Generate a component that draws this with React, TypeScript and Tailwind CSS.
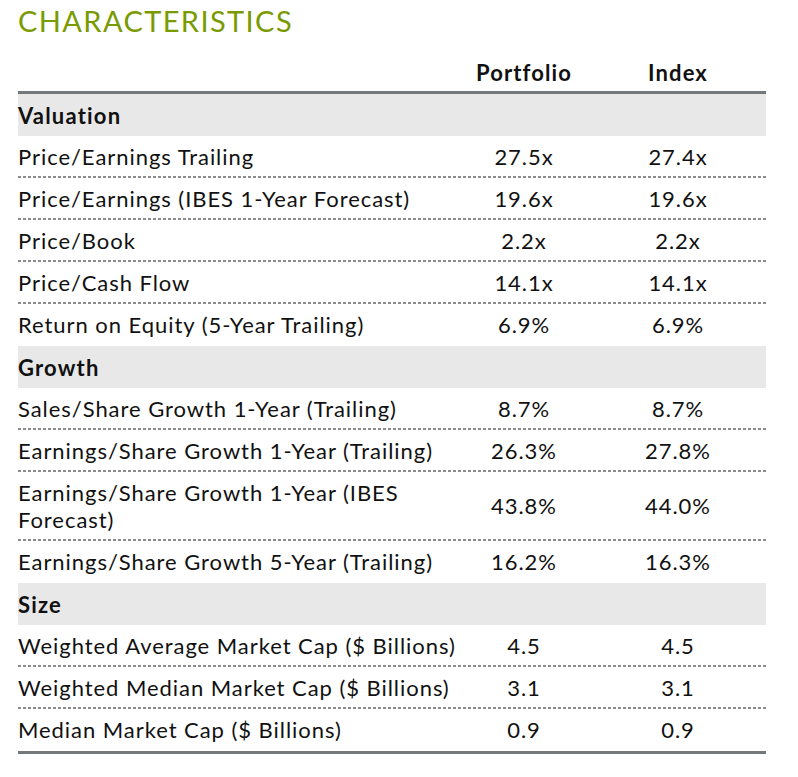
import React from 'react';

type Row = { label: string; portfolio: string; index: string };
type Section = { title: string; rows: Row[] };

const sections: Section[] = [
  {
    title: 'Valuation',
    rows: [
      { label: 'Price/Earnings Trailing', portfolio: '27.5x', index: '27.4x' },
      { label: 'Price/Earnings (IBES 1-Year Forecast)', portfolio: '19.6x', index: '19.6x' },
      { label: 'Price/Book', portfolio: '2.2x', index: '2.2x' },
      { label: 'Price/Cash Flow', portfolio: '14.1x', index: '14.1x' },
      { label: 'Return on Equity (5-Year Trailing)', portfolio: '6.9%', index: '6.9%' },
    ],
  },
  {
    title: 'Growth',
    rows: [
      { label: 'Sales/Share Growth 1-Year (Trailing)', portfolio: '8.7%', index: '8.7%' },
      { label: 'Earnings/Share Growth 1-Year (Trailing)', portfolio: '26.3%', index: '27.8%' },
      { label: 'Earnings/Share Growth 1-Year (IBES Forecast)', portfolio: '43.8%', index: '44.0%' },
      { label: 'Earnings/Share Growth 5-Year (Trailing)', portfolio: '16.2%', index: '16.3%' },
    ],
  },
  {
    title: 'Size',
    rows: [
      { label: 'Weighted Average Market Cap ($ Billions)', portfolio: '4.5', index: '4.5' },
      { label: 'Weighted Median Market Cap ($ Billions)', portfolio: '3.1', index: '3.1' },
      { label: 'Median Market Cap ($ Billions)', portfolio: '0.9', index: '0.9' },
    ],
  },
];

export default function App() {
  return (
    <div className="w-[798px] h-[777px] bg-white pl-[18px] font-['Lato',sans-serif] text-[#111]">
      <h1 className="h-[42px] text-[29px] leading-[42px] text-[#7a9a01] tracking-[1.4px]">CHARACTERISTICS</h1>

      <div className="w-[748px]">
        {/* column headings */}
        <div className="grid grid-cols-[440px_132px_176px] h-[49px] items-end pb-[2px] text-[22px] font-bold tracking-[1.1px]">
          <div />
          <div className="text-center">Portfolio</div>
          <div className="text-center">Index</div>
        </div>

        <div className="border-t-[3px] border-[#75787b] border-b-[3px]">
          {sections.map((section) => (
            <div key={section.title}>
              <div className="h-[42px] flex items-center bg-[#e8e8e8] text-[22px] font-bold tracking-[1.2px]">
                {section.title}
              </div>
              {section.rows.map((row, i) => {
                const last = i === section.rows.length - 1;
                return (
                  <div key={row.label}>
                    <div className="grid grid-cols-[440px_132px_176px] items-center min-h-[40px] py-[6.5px] text-[22px] leading-[27px] tracking-[0.95px]">
                      <div>{row.label}</div>
                      <div className="text-center">{row.portfolio}</div>
                      <div className="text-center">{row.index}</div>
                    </div>
                    {last ? (
                      <div className="h-[2px]" />
                    ) : (
                      <div className="h-[2px] bg-[repeating-linear-gradient(90deg,#8c8c8c_0_3px,transparent_3px_5px)]" />
                    )}
                  </div>
                );
              })}
            </div>
          ))}
        </div>
      </div>
    </div>
  );
}
